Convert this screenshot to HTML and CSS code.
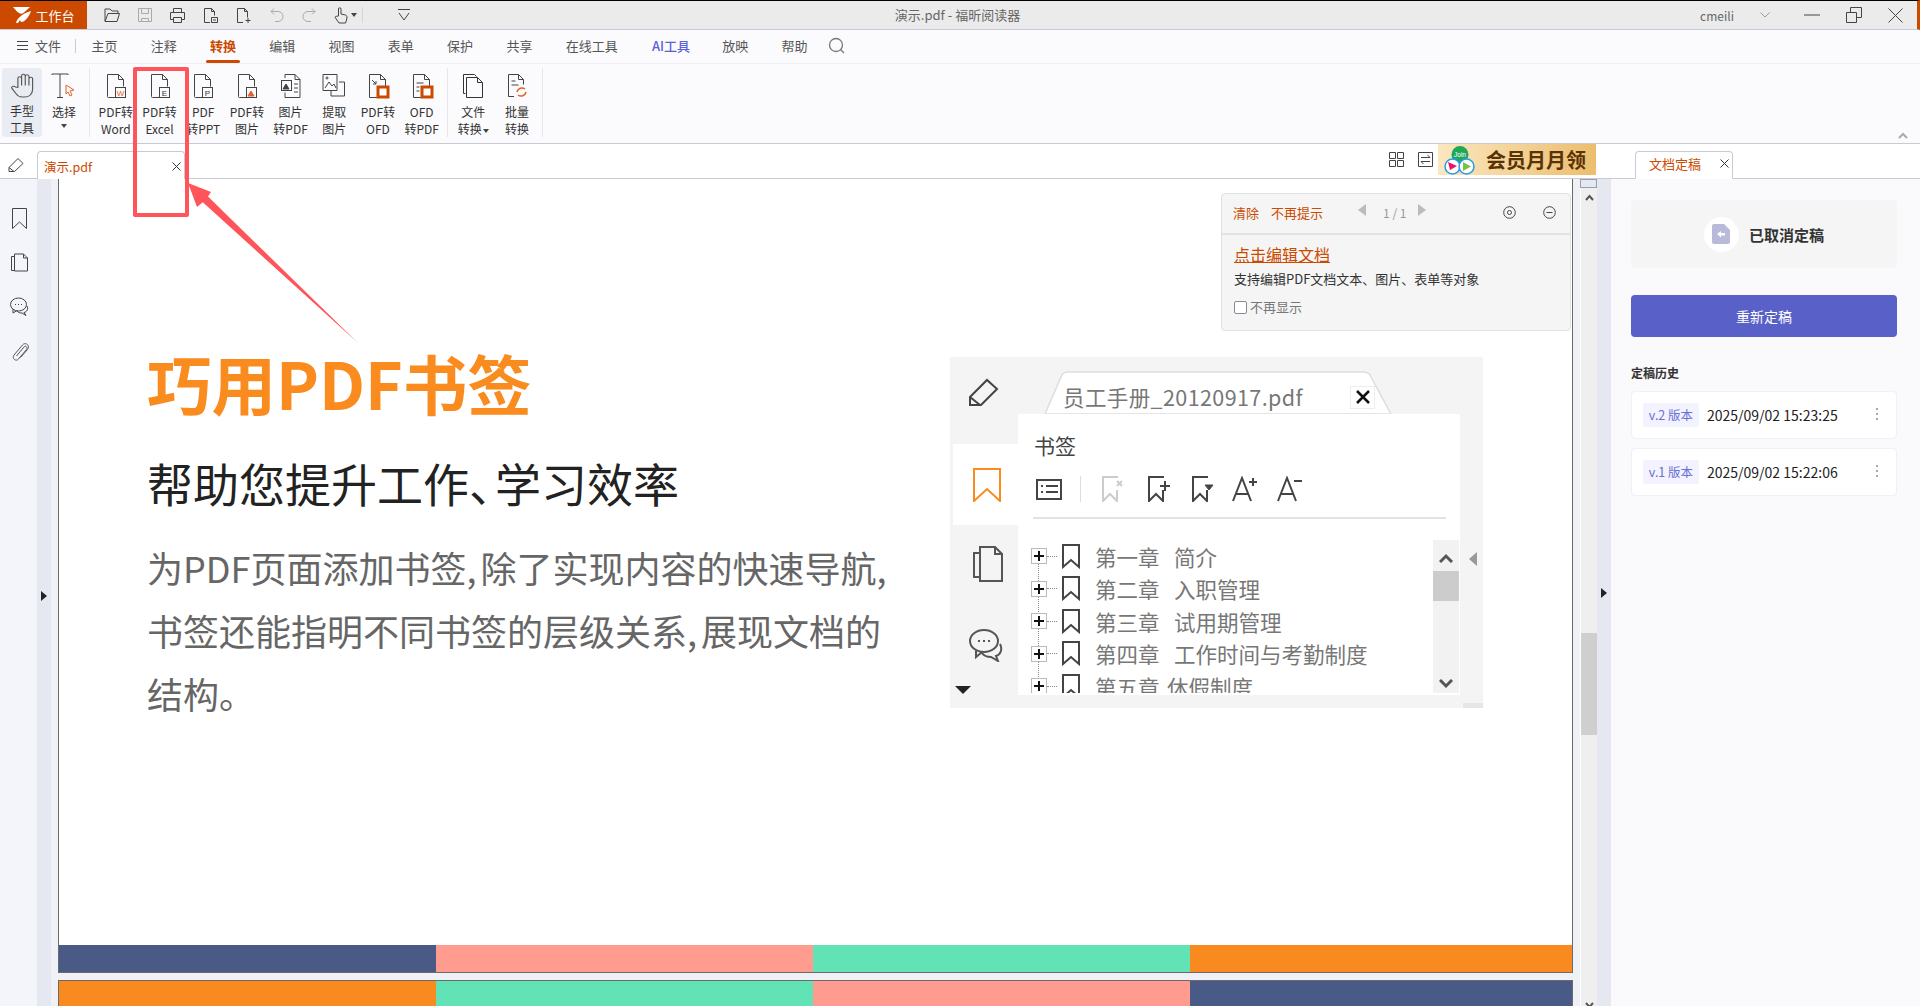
FILE: index.html
```html
<!DOCTYPE html>
<html lang="zh-CN">
<head>
  <meta charset="UTF-8" />
  <title>演示.pdf - 福昕阅读器</title>
  <link rel="stylesheet" href="styles.css">
</head>
<body>
  <!-- Title bar -->
  <header class="titlebar">
    <div class="workbench">
      <svg width="20" height="18" viewBox="0 0 20 18"><path d="M1 1h17l-6 5.500C9 9 7 7 5 5.500zM4 17c1-4 5-9 15-12-2 6-6 11-10 11l-1-2-2 3z" fill="#fff"/></svg>
      <span>工作台</span>
    </div>
    <div class="qat">
      <span class="qat-btn"><svg class="ico" width="18" height="16" viewBox="0 0 18 16"><path d="M2 14V2h5l2 2h6v2M2 14.500h12l2.500-8H5l-3 8"/></svg></span>
      <span class="qat-btn"><svg class="ico off" width="16" height="16" viewBox="0 0 16 16"><path d="M1.500 1.500h13v13h-13zM4.500 1.500v5h7v-5M4.500 14.500v-3h7v3"/></svg></span>
      <span class="qat-btn"><svg class="ico" width="17" height="17" viewBox="0 0 17 17"><path d="M4.500 5V1.500h8V5M1.500 12.500V5.500h14v7h-3M4.500 12.500h-3M4.500 10.500h8v5h-8z"/></svg></span>
      <span class="qat-btn"><svg class="ico" width="17" height="17" viewBox="0 0 17 17"><path d="M8 15.500H2.500v-14h7l3 3v4M9.500 1.500v3h3M9.500 10.500h6v5h-6zM11 13h3"/></svg></span>
      <span class="qat-btn"><svg class="ico" width="17" height="17" viewBox="0 0 17 17"><path d="M8 15.500H2.500v-14h7l3 3v6M9.500 1.500v3h3M13 11v5M10.500 13.500h5"/></svg></span>
      <span class="qat-btn"><svg class="ico off" width="15" height="16" viewBox="0 0 15 16"><path d="M5 1.500l-3 3 3 3M2 4.500h7a4.500 4.500 0 0 1 0 10H6"/></svg></span>
      <span class="qat-btn"><svg class="ico off" width="15" height="16" viewBox="0 0 15 16"><path d="M10 1.500l3 3-3 3M13 4.500H6a4.500 4.500 0 0 0 0 10h3"/></svg></span>
      <span class="qat-btn hand-btn"><svg class="ico" width="14" height="17" viewBox="0 0 14 17"><path d="M4.500 9V2a1.200 1.200 0 0 1 2.500 0v5l4.500 1c1 .3 1.500 1 1.500 2l-.5 3-1 3H5L1.500 11c-.7-1-.2-2 1-1.700z"/></svg><i class="caret"></i></span>
      <span class="qat-sep"></span>
      <span class="qat-btn"><svg class="ico" width="14" height="14" viewBox="0 0 14 14"><path d="M1 1.500h12M2 5l5 7 5-7"/></svg></span>
    </div>
    <div class="doc-title">演示.pdf - 福昕阅读器</div>
    <div class="win-ctrl">
      <span class="user">cmeili</span>
      <svg class="user-arrow ico" width="10" height="6" viewBox="0 0 10 6"><path d="M.5.500 5 5 9.500.500" stroke="#999"/></svg>
      <svg class="ico" width="16" height="2" viewBox="0 0 16 2"><path d="M0 1h16"/></svg>
      <svg class="ico" width="16" height="16" viewBox="0 0 16 16"><path d="M.5 5.500h10v10H.5zM4.500 5.500v-5h11v10h-5"/></svg>
      <svg class="ico" width="15" height="15" viewBox="0 0 15 15"><path d="M.5.500l14 14M14.500.500l-14 14"/></svg>
    </div>
  </header>

  <!-- Menu -->
  <nav class="menubar">
    <span class="file-menu">
      <svg class="ico" width="11" height="9" viewBox="0 0 11 9"><path d="M0 .500h11M0 4.500h11M0 8.500h11"/></svg>
      <span>文件</span>
    </span>
    <span class="menu-sep"></span>
    <a class="menu-item">主页</a>
    <a class="menu-item">注释</a>
    <a class="menu-item active">转换</a>
    <a class="menu-item">编辑</a>
    <a class="menu-item">视图</a>
    <a class="menu-item">表单</a>
    <a class="menu-item">保护</a>
    <a class="menu-item">共享</a>
    <a class="menu-item">在线工具</a>
    <a class="menu-item ai">AI工具</a>
    <a class="menu-item">放映</a>
    <a class="menu-item">帮助</a>
    <svg class="menu-search" width="17" height="17" viewBox="0 0 17 17" fill="none" stroke="#777" stroke-width="1.300"><circle cx="8" cy="8" r="6.500"/><path d="M12.500 12.500l3.500 3.500"/></svg>
  </nav>

  <!-- Ribbon -->
  <section class="ribbon">
    <div class="tool tool-hand">
      <svg class="ico" width="23" height="25" viewBox="0 0 20 26" preserveAspectRatio="none"><path d="M6 15V5.500a1.600 1.600 0 0 1 3.200 0V3a1.600 1.600 0 0 1 3.200 0v.5a1.600 1.600 0 0 1 3.200 0V6a1.600 1.600 0 0 1 3.200 0v11c0 5-3 8-7 8h-2c-3 0-4-1-5-3l-4-6c-1-2 1.500-3 3-1.500zM9.200 5.500V13M12.400 3.500V13M15.600 6V13" stroke="#555"/></svg>
      <span>手型<br>工具</span>
    </div>
    <div class="tool tool-select">
      <svg class="ico" width="26" height="26" viewBox="0 0 26 26"><path d="M1 2V1h16v1M9 1v23M6 24.500h6"/><path d="M15 12l8 5-4 1 2 4-2 1-2-4-2 2z" stroke="#e2622a"/></svg>
      <span>选择</span>
      <i class="caret down"></i>
    </div>
    <span class="rb-sep"></span>
    <div class="tool">
      <svg class="ico" width="24" height="26" viewBox="0 0 24 26"><path d="M11 24.500H4.500a1 1 0 0 1-1-1v-22h11l5 5v7M14.500 1.500v5h5"/><rect x="11.500" y="14.500" width="10" height="10"/><text x="16.500" y="22.500" class="badge-orange">W</text></svg>
      <span>PDF转<br>Word</span>
    </div>
    <div class="tool">
      <svg class="ico" width="24" height="26" viewBox="0 0 24 26"><path d="M11 24.500H4.500a1 1 0 0 1-1-1v-22h11l5 5v7M14.500 1.500v5h5"/><rect x="11.500" y="14.500" width="10" height="10"/><text x="16.500" y="22.500" class="badge-dark">E</text></svg>
      <span>PDF转<br>Excel</span>
    </div>
    <div class="tool">
      <svg class="ico" width="24" height="26" viewBox="0 0 24 26"><path d="M11 24.500H4.500a1 1 0 0 1-1-1v-22h11l5 5v7M14.500 1.500v5h5"/><rect x="11.500" y="14.500" width="10" height="10"/><text x="16.500" y="22.500" class="badge-dark">P</text></svg>
      <span>PDF<br>转PPT</span>
    </div>
    <div class="tool">
      <svg class="ico" width="24" height="26" viewBox="0 0 24 26"><path d="M11 24.500H4.500a1 1 0 0 1-1-1v-22h11l5 5v7M14.500 1.500v5h5"/><rect x="11.500" y="14.500" width="10" height="10"/><path d="M13 23l3-5 3 5z" fill="#e2622a" stroke="#e2622a"/></svg>
      <span>PDF转<br>图片</span>
    </div>
    <div class="tool">
      <svg class="ico" width="24" height="26" viewBox="0 0 24 26"><path d="M6 5V1.500h10l5 5v18H6v-5M16 1.500v5h5M15 11h4M15 15h4M15 19h4"/><rect x="2.500" y="7.500" width="10" height="10"/><path d="M4 16l3-5 3 5z" fill="#444"/></svg>
      <span>图片<br>转PDF</span>
    </div>
    <div class="tool">
      <svg class="ico" width="26" height="26" viewBox="0 0 26 26"><path d="M2 1.500h14v16H2zM4 15l4-6 3 4 2-2 2 4M18 9h5.500v14H10v-5"/><circle cx="6" cy="5" r="1"/></svg>
      <span>提取<br>图片</span>
    </div>
    <div class="tool">
      <svg class="ico" width="24" height="26" viewBox="0 0 24 26"><path d="M11 24.500H3.500v-23h11l5 5v7M14.500 1.500v5h5M6 7l4 4M10 8v3H7"/><rect x="12" y="14" width="10" height="10" fill="#fff" stroke="#cc4a00" stroke-width="3"/></svg>
      <span>PDF转<br>OFD</span>
    </div>
    <div class="tool">
      <svg class="ico" width="24" height="26" viewBox="0 0 24 26"><path d="M11 24.500H3.500v-23h11l5 5v7M14.500 1.500v5h5M6.500 10h7M6.500 14h3M6.500 18h3"/><rect x="12" y="14" width="10" height="10" fill="#fff" stroke="#cc4a00" stroke-width="3"/></svg>
      <span>OFD<br>转PDF</span>
    </div>
    <span class="rb-sep"></span>
    <div class="tool">
      <svg class="ico" width="24" height="26" viewBox="0 0 24 26"><path d="M4.500 20.500h-2v-19h11l2 2M5.500 4.500h11l5 5v15h-16zM16.500 4.500v5h5" stroke="#333"/></svg>
      <span>文件<br>转换<i class="caret small"></i></span>
    </div>
    <div class="tool">
      <svg class="ico" width="24" height="26" viewBox="0 0 24 26"><path d="M9 23.500H3.500v-22h10l5 5v5M13.500 1.500v5h5M6.500 8h4M6.500 12h7"/><path d="M12 19a5 5 0 0 1 8-3M21 19a5 5 0 0 1-8 3" stroke="#e2622a" stroke-width="1.500"/></svg>
      <span>批量<br>转换</span>
    </div>
    <span class="rb-sep"></span>
    <svg class="rb-collapse" width="10" height="7" viewBox="0 0 10 7" fill="none" stroke="#aaa" stroke-width="2"><path d="M1 6l4-4 4 4"/></svg>
  </section>

  <!-- Tabs -->
  <div class="tabbar">
    <svg class="tab-pencil ico" width="16" height="16" viewBox="0 0 16 16"><path d="M1 10.500 10 1.500l5 5-8.500 8H1zM1 10.500l5 4"/></svg>
    <div class="tab">
      <span>演示.pdf</span>
      <svg class="tab-x ico" width="9" height="9" viewBox="0 0 9 9"><path d="M.5.500l8 8M8.500.500l-8 8"/></svg>
    </div>
    <div class="tabbar-right">
      <svg class="ico" width="15" height="15" viewBox="0 0 15 15"><path d="M.5.500h6v6h-6zM8.500.500h6v6h-6zM.5 8.500h6v6h-6zM8.500 8.500h6v6h-6z"/></svg>
      <svg class="ico" width="15" height="15" viewBox="0 0 15 15"><path d="M.5.500h14v14H.5zM3 5.500h9L9.500 3M12 9.500H3L5.500 12"/></svg>
      <div class="vip-banner">
        <svg class="vip-logo" width="34" height="30" viewBox="0 0 34 30">
          <circle cx="17" cy="9.500" r="8.500" fill="#1fa85a"/>
          <text x="17" y="11.500" class="vip-mark">Join</text>
          <circle cx="9.500" cy="21.500" r="7.500" fill="#fff" stroke="#2a9ae8" stroke-width="1.500"/>
          <circle cx="23.500" cy="21.500" r="7.500" fill="#fff" stroke="#2a9ae8" stroke-width="1.500"/>
          <path d="M5 17l9 4-7 4z" fill="#ee1166"/>
          <path d="M20 17l8 4.500-8 4.500z" fill="#7bc043"/>
        </svg>
        <span>会员月月领</span>
      </div>
    </div>
    <div class="tab tab-side">
      <span>文档定稿</span>
      <svg class="tab-x ico" width="9" height="9" viewBox="0 0 9 9"><path d="M.5.500l8 8M8.500.500l-8 8"/></svg>
    </div>
  </div>

  <main class="main">
    <!-- Left rail -->
    <aside class="rail">
      <svg class="ico" width="16" height="22" viewBox="0 0 16 22"><path d="M.5.500h14v20L7.500 14l-7 6.500z"/></svg>
      <svg class="ico" width="17" height="21" viewBox="0 0 17 21"><path d="M3.500 17.500h-3v-14h3M3.500 1h9l4 4v13h-13zM12.500 1v4h4"/></svg>
      <svg class="ico" width="19" height="19" viewBox="0 0 19 19"><ellipse cx="8.500" cy="7.500" rx="8" ry="6.500"/><path d="M3 12l0 4 4-2.500M17 9c1.500 3 0 6-3 6.500l2 3-4-2.500c-2 0-4-.5-5-2"/><path d="M5 7.500h1M8 7.500h1M11 7.500h1"/></svg>
      <svg class="rail-clip ico" width="18" height="20" viewBox="0 0 18 20"><path d="M5.500 14 13 5c1.500-2 4 .5 2.500 2.500L7.500 17c-2.500 3-7-.5-4.500-4l8.500-10c3-3.500 8 .5 5 4.500l-7 8" stroke="#555"/></svg>
    </aside>
    <div class="gutter left"><i class="tri-right"></i></div>

    <!-- Document -->
    <div class="doc-area">
      <article class="page">
        <div class="page-body">
          <div class="pdf-text">
            <h1>巧用PDF书签</h1>
            <h2>帮助您提升工作<span class="narrow">、</span>学习效率</h2>
            <p>为PDF页面添加书签<span class="comma">,</span>除了实现内容的快速导航<span class="comma">,</span><br>书签还能指明不同书签的层级关系<span class="comma">,</span>展现文档的<br>结构。</p>
          </div>

          <figure class="fig">
            <div class="fig-top">
              <svg class="fig-pencil ico" width="30" height="28" viewBox="0 0 30 28"><path d="M1 19 18 2l10 9-16 16H1zM1 19l10 8" stroke="#444" stroke-width="2"/></svg>
              <div class="fig-tab">
                <svg class="fig-tab-bg" width="346" height="43" viewBox="0 0 346 43"><path d="M0 43 16 6c1-3 3-5 7-5h295c4 0 7 2 8 5l20 37z" fill="#fff" stroke="#ddd" stroke-width="1.500"/></svg>
                <span class="fig-tab-name">员工手册_20120917.pdf</span>
                <span class="fig-tab-x">
                  <svg width="14" height="14" viewBox="0 0 14 14" fill="none" stroke="#111" stroke-width="2.500"><path d="M1 1l12 12M13 1 1 13"/></svg>
                </span>
              </div>
            </div>
            <div class="fig-body">
              <div class="fig-side">
                <div class="fig-side-active">
                  <svg width="28" height="34" viewBox="0 0 28 34" fill="none" stroke="#f98b1f" stroke-width="2"><path d="M1 1h26v32L14 21 1 33z"/></svg>
                </div>
                <svg class="fig-side-ico ico" width="30" height="36" viewBox="0 0 30 36"><path d="M6 31H1V7h5M7 1h15l7 7v27H7zM22 1v7h7" stroke="#555" stroke-width="2"/></svg>
                <svg class="fig-side-ico wide ico" width="34" height="34" viewBox="0 0 34 34"><ellipse cx="15" cy="13" rx="14" ry="11" stroke="#555" stroke-width="2"/><path d="M7 23v6l6-5M31 16c3 6 0 11-4 12l2 5-7-4c-4 0-7-1-9-4" stroke="#555" stroke-width="2"/><path d="M9 13h2M14 13h2M19 13h2" stroke="#555" stroke-width="2"/></svg>
                <i class="fig-tri"></i>
              </div>
              <div class="fig-pane">
                <div class="fig-title">书签</div>
                <div class="fig-tools">
                  <svg class="ico" width="26" height="24" viewBox="0 0 26 24"><path d="M1 3h24v19H1zM5 9h2M10 9h12M5 15h2M10 15h12" stroke="#444" stroke-width="2"/></svg>
                  <span class="fig-tools-sep"></span>
                  <svg class="ico" width="22" height="26" viewBox="0 0 22 26"><path d="M16 1H1v24l7-7 7 7V14M15 5l5 5M20 5l-5 5" stroke="#ccc" stroke-width="2"/></svg>
                  <svg class="ico" width="22" height="26" viewBox="0 0 22 26"><path d="M16 1H1v24l7-7 7 7V14M17 5v10M12 10h10" stroke="#444" stroke-width="2"/></svg>
                  <svg class="ico" width="22" height="26" viewBox="0 0 22 26"><path d="M16 1H1v24l7-7 7 7V14" stroke="#444" stroke-width="2"/><path d="M13 9h8l-4 5z" fill="#444"/></svg>
                  <svg class="ico" width="26" height="26" viewBox="0 0 26 26"><path d="M1 25 10 2l9 23M4 18h12M17 6h8M21 2v8" stroke="#444" stroke-width="2"/></svg>
                  <svg class="ico" width="26" height="26" viewBox="0 0 26 26"><path d="M1 25 10 2l9 23M4 18h12M17 5h8" stroke="#444" stroke-width="2"/></svg>
                </div>
                <div class="fig-list">
                  <div class="fig-tree">
                    <div class="tree-row"><i class="plus"></i><i class="dots"></i><svg class="ico" width="18" height="25" viewBox="0 0 18 25"><path d="M1 1h16v22l-8-7-8 7z" stroke="#444" stroke-width="2"/></svg><span class="ch">第一章</span><span>简介</span></div>
                    <div class="tree-row"><i class="plus"></i><i class="dots"></i><svg class="ico" width="18" height="25" viewBox="0 0 18 25"><path d="M1 1h16v22l-8-7-8 7z" stroke="#444" stroke-width="2"/></svg><span class="ch">第二章</span><span>入职管理</span></div>
                    <div class="tree-row"><i class="plus"></i><i class="dots"></i><svg class="ico" width="18" height="25" viewBox="0 0 18 25"><path d="M1 1h16v22l-8-7-8 7z" stroke="#444" stroke-width="2"/></svg><span class="ch">第三章</span><span>试用期管理</span></div>
                    <div class="tree-row"><i class="plus"></i><i class="dots"></i><svg class="ico" width="18" height="25" viewBox="0 0 18 25"><path d="M1 1h16v22l-8-7-8 7z" stroke="#444" stroke-width="2"/></svg><span class="ch">第四章</span><span>工作时间与考勤制度</span></div>
                    <div class="tree-row"><i class="plus"></i><i class="dots"></i><svg class="ico" width="18" height="25" viewBox="0 0 18 25"><path d="M1 1h16v22l-8-7-8 7z" stroke="#444" stroke-width="2"/></svg><span class="ch short">第五章</span><span>休假制度</span></div>
                  </div>
                  <div class="fig-scroll">
                    <svg width="14" height="10" viewBox="0 0 14 10" fill="none" stroke="#555" stroke-width="3"><path d="M1 9l6-6 6 6"/></svg>
                    <div class="fig-thumb"></div>
                    <svg class="fig-scroll-down" width="14" height="10" viewBox="0 0 14 10" fill="none" stroke="#555" stroke-width="3"><path d="M1 1l6 6 6-6"/></svg>
                  </div>
                </div>
              </div>
              <div class="fig-right"><i class="tri-left"></i></div>
            </div>
            <div class="fig-foot"><span></span></div>
          </figure>
        </div>
        <div class="band">
          <span class="c-navy"></span><span class="c-pink"></span><span class="c-green"></span><span class="c-orange"></span>
        </div>

        <!-- Tip box -->
        <div class="tip">
          <div class="tip-head">
            <a class="tip-link">清除</a>
            <a class="tip-link">不再提示</a>
            <i class="tip-prev"></i>
            <span class="tip-count">1 / 1</span>
            <i class="tip-next"></i>
            <svg class="tip-gear ico" width="13" height="13" viewBox="0 0 13 13"><circle cx="6.500" cy="6.500" r="5.800"/><circle cx="6.500" cy="6.500" r="2"/></svg>
            <svg class="tip-min ico" width="13" height="13" viewBox="0 0 13 13"><circle cx="6.500" cy="6.500" r="5.800"/><path d="M3.500 6.500h6"/></svg>
          </div>
          <div class="tip-body">
            <a class="tip-title">点击编辑文档</a>
            <div class="tip-desc">支持编辑PDF文档文本、图片、表单等对象</div>
            <label class="tip-check"><i></i>不再显示</label>
          </div>
        </div>
      </article>

      <article class="page page-next">
        <div class="band">
          <span class="c-orange"></span><span class="c-green"></span><span class="c-pink"></span><span class="c-navy"></span>
        </div>
      </article>
    </div>

    <!-- Scrollbar -->
    <div class="vscroll">
      <div class="vscroll-top"></div>
      <svg class="vscroll-up" width="9" height="7" viewBox="0 0 9 7" fill="none" stroke="#555" stroke-width="2"><path d="M1 6l3.500-4 3.500 4"/></svg>
      <div class="vscroll-thumb"></div>
      <svg class="vscroll-down" width="9" height="7" viewBox="0 0 9 7" fill="none" stroke="#555" stroke-width="2"><path d="M1 1l3.500 4 3.500-4"/></svg>
    </div>
    <div class="gutter right"><i class="tri-right"></i></div>

    <!-- Side panel -->
    <aside class="side">
      <div class="status-card">
        <span class="status-icon">
          <svg width="18" height="20" viewBox="0 0 18 20"><path d="M2 0h10l6 6v12a2 2 0 0 1-2 2H2a2 2 0 0 1-2-2V2a2 2 0 0 1 2-2z" fill="#b9bad9"/><path d="M5 10l4-3v2h4v2.500H9v2z" fill="#fff"/></svg>
        </span>
        <span class="status-text">已取消定稿</span>
      </div>
      <button class="redo-btn">重新定稿</button>
      <h3 class="hist-title">定稿历史</h3>
      <div class="hist-item">
        <span class="hist-badge">v.2 版本</span>
        <span class="hist-date">2025/09/02 15:23:25</span>
        <span class="hist-more"><i></i><i></i><i></i></span>
      </div>
      <div class="hist-item">
        <span class="hist-badge">v.1 版本</span>
        <span class="hist-date">2025/09/02 15:22:06</span>
        <span class="hist-more"><i></i><i></i><i></i></span>
      </div>
    </aside>
  </main>

  <!-- Annotation drawn over the app -->
  <div class="mark-box"></div>
  <svg class="mark-arrow" width="400" height="360" viewBox="0 0 400 360"><polygon points="188,183 211,192 208,196.500 358,343 202.800,202.300 197,207" fill="#ff5459"/></svg>
</body>
</html>
```

FILE: styles.css
```css
* {
  box-sizing: border-box;
}

body {
  margin: 0;
  width: 1920px;
  height: 1006px;
  overflow: hidden;
  display: flex;
  flex-direction: column;
  position: relative;
  font-family: "Noto Sans CJK SC", "Noto Sans", sans-serif;
  color: #444;
  background: #fff;
}

i {
  display: block;
  font-style: normal;
}

.ico {
  display: block;
  fill: none;
  stroke: #444;
  stroke-width: 1;
  flex: none;
}

.ico.off {
  stroke: #aaa;
}

/* Title bar */
.titlebar {
  height: 30px;
  flex: none;
  display: flex;
  align-items: center;
  position: relative;
  background: #ebebeb;
  border-top: 1px solid #000;
  border-bottom: 1px solid #c9c9d8;
  border-right: 3px solid #cc4a00;
}

.workbench {
  width: 87px;
  height: 100%;
  display: flex;
  align-items: center;
  justify-content: center;
  gap: 3px;
  background: #cc4a00;
  color: #fff;
  font-size: 13px;
}

.qat {
  display: flex;
  align-items: center;
  padding-left: 8px;
}

.qat-btn {
  width: 33px;
  display: flex;
  justify-content: center;
  align-items: center;
}

.hand-btn {
  gap: 3px;
  padding-left: 6px;
}

.caret {
  width: 0;
  height: 0;
  border-left: 3.500px solid transparent;
  border-right: 3.500px solid transparent;
  border-top: 4px solid #444;
}

.caret.small {
  display: inline-block;
  margin-left: 1px;
  vertical-align: middle;
}

.caret.down {
  margin-top: 4px;
}

.qat-sep {
  width: 1px;
  height: 16px;
  margin: 0 24px 0 3px;
  background: #d5d5d5;
}

.doc-title {
  position: absolute;
  left: 0;
  right: 0;
  top: 5px;
  text-align: center;
  font-size: 13px;
  line-height: 18px;
  color: #666;
  padding-right: 2px;
  pointer-events: none;
}

.win-ctrl {
  margin-left: auto;
  display: flex;
  align-items: center;
  padding-right: 14px;
  gap: 26px;
}

.user {
  font-size: 12px;
  color: #666;
}

.user-arrow {
  margin-right: 8px;
}

/* Menu */
.menubar {
  height: 34px;
  flex: none;
  display: flex;
  align-items: center;
  gap: 33.250px;
  padding-left: 17px;
  background: #fbfbfd;
  border-bottom: 1px solid #f0f0f4;
  font-size: 13px;
  color: #555;
}

.file-menu {
  display: flex;
  align-items: center;
  gap: 7px;
  margin-right: -22px;
  margin-top: -2px;
}

.menu-sep {
  width: 1px;
  height: 14px;
  background: #ccc;
  margin-left: 3px;
  margin-right: -18px;
  margin-top: -2px;
}

.menu-item {
  height: 100%;
  display: flex;
  align-items: center;
  position: relative;
  padding-bottom: 2px;
  white-space: nowrap;
}

.menu-item.active {
  color: #cc4a00;
  font-weight: 700;
}

.menu-item.active::after {
  content: "";
  position: absolute;
  left: -4px;
  right: -4px;
  bottom: 0;
  height: 3px;
  border-radius: 2px;
  background: #cc4a00;
}

.menu-item.ai {
  color: #5a62d8;
  font-weight: 500;
  margin-left: 1px;
  margin-right: -1px;
}

.menu-search {
  margin-left: -13px;
  margin-top: -2px;
}

/* Ribbon */
.ribbon {
  height: 80px;
  flex: none;
  display: flex;
  align-items: flex-start;
  position: relative;
  padding: 4px 0 0 2px;
  background: #fbfbfd;
  border-bottom: 1px solid #c9c9d8;
}

.tool {
  width: 43.700px;
  height: 69px;
  display: flex;
  flex-direction: column;
  align-items: center;
  padding-top: 5px;
  font-size: 12px;
  line-height: 17px;
  color: #333;
  text-align: center;
  white-space: nowrap;
}

.tool span {
  margin-top: 4px;
}

.tool-hand {
  width: 40px;
  background: #e9ecf3;
  border-radius: 3px;
}

.tool-select {
  width: 44px;
}

.rb-sep {
  width: 1px;
  height: 69px;
  margin: 0 4px 0 3px;
  background: #e6e6ec;
}

.rb-collapse {
  position: absolute;
  right: 12px;
  bottom: 4px;
}

.badge-orange,
.badge-dark,
.vip-mark {
  font-size: 8px;
  font-family: "Liberation Sans", sans-serif;
  text-anchor: middle;
  stroke: none;
}

.badge-orange {
  fill: #e2622a;
}

.badge-dark {
  fill: #333;
}

.vip-mark {
  font-size: 6.500px;
  font-weight: 400;
  fill: #fff;
}

/* Tabs */
.tabbar {
  height: 35px;
  flex: none;
  display: flex;
  align-items: flex-end;
  background: #fff;
  border-bottom: 1px solid #c9c9d8;
}

.tab-pencil {
  align-self: center;
  margin: 7px 13px 0 8px;
}

.tab {
  width: 148px;
  height: 28px;
  margin-bottom: -1px;
  display: flex;
  align-items: center;
  justify-content: space-between;
  padding: 2px 3px 0 6px;
  font-size: 12.500px;
  color: #cc4a00;
  background: #fff;
  border: 1px solid #c9c9d8;
  border-bottom: none;
  border-radius: 4px 4px 0 0;
}

.tabbar-right {
  display: flex;
  align-items: center;
  align-self: flex-start;
  margin-left: auto;
  gap: 14px;
}

.vip-banner {
  width: 158px;
  height: 31px;
  margin-left: -9px;
  display: flex;
  align-items: center;
  padding-left: 5px;
  gap: 9px;
  background: linear-gradient(90deg, #fbe7c0, #ecbd6e);
  color: #5a3304;
  font-size: 20px;
  font-weight: 700;
}

.vip-logo {
  flex: none;
}

.tab-side {
  width: 98px;
  margin-left: 39px;
  margin-right: 187px;
  padding: 0 3px 4px 13px;
  font-size: 13px;
}

.tab-x {
  stroke: #333;
}

/* Main area */
.main {
  flex: 1;
  display: flex;
  min-height: 0;
}

.rail {
  width: 37px;
  flex: none;
  display: flex;
  flex-direction: column;
  align-items: center;
  gap: 23px;
  padding: 29px 0 0 2px;
  background: #f3f5fa;
}

.rail-clip {
  margin-top: 3px;
}

.gutter {
  flex: none;
  display: flex;
  align-items: center;
  justify-content: center;
  background: #e5e8f1;
}

.gutter.left {
  width: 14px;
  padding-top: 7px;
}

.gutter.right {
  width: 14px;
}

.tri-right {
  width: 0;
  height: 0;
  border-top: 5px solid transparent;
  border-bottom: 5px solid transparent;
  border-left: 6px solid #222;
}

.doc-area {
  width: 1530px;
  flex: none;
  display: flex;
  flex-direction: column;
  gap: 7px;
  padding: 0 7px 0 7px;
  background: #eff1f6;
  border-right: 1px solid #fff;
}

.page {
  height: 794px;
  flex: none;
  display: flex;
  flex-direction: column;
  position: relative;
  background: #fff;
  border: 1px solid #6a6a6a;
  border-top: none;
}

.page-next {
  flex: 1;
  height: auto;
  border-top: 1px solid #6a6a6a;
  border-bottom: none;
}

.page-body {
  flex: 1;
  display: flex;
  min-height: 0;
}

.pdf-text {
  width: 891px;
  flex: none;
  padding: 163px 0 0 88px;
}

.pdf-text h1 {
  margin: 0;
  font-size: 64.500px;
  line-height: 80px;
  font-weight: 700;
  color: #f98b1f;
  white-space: nowrap;
}

.pdf-text h2 {
  margin: 30px 0 0;
  font-size: 46px;
  line-height: 60px;
  font-weight: 400;
  color: #222;
  white-space: nowrap;
}

.narrow {
  letter-spacing: -20px;
}

.pdf-text p {
  margin: 24px 0 0;
  font-size: 36px;
  line-height: 63px;
  color: #666;
  white-space: nowrap;
}

.comma {
  margin-right: 4px;
}

.band {
  height: 27px;
  flex: none;
  display: grid;
  grid-template-columns: 377px 377px 377px 1fr;
}

.c-navy { background: #4a5a86; }
.c-pink { background: #ff9c8f; }
.c-green { background: #62e3b5; }
.c-orange { background: #f98a1f; }

/* Bookmark figure inside the PDF */
.fig {
  width: 533px;
  height: 351px;
  margin: 178px 0 0;
  flex: none;
  display: flex;
  flex-direction: column;
  background: #f4f4f4;
}

.fig-top {
  height: 57px;
  flex: none;
  display: flex;
  align-items: flex-end;
}

.fig-pencil {
  margin: 0 0 8px 19px;
}

.fig-tab {
  width: 346px;
  height: 43px;
  margin-left: 46px;
  position: relative;
  display: flex;
  align-items: center;
  padding: 7px 16px 0 18px;
  justify-content: space-between;
}

.fig-tab-bg {
  position: absolute;
  left: 0;
  top: 0;
}

.fig-tab-name {
  position: relative;
  font-size: 21.500px;
  color: #777;
  white-space: nowrap;
  letter-spacing: .4px;
}

.fig-tab-x {
  position: relative;
  width: 25px;
  height: 23px;
  margin-top: 2px;
  display: flex;
  align-items: center;
  justify-content: center;
  background: #fff;
  border: 1px solid #eee;
}

.fig-body {
  height: 281px;
  flex: none;
  display: flex;
}

.fig-side {
  width: 68px;
  flex: none;
  display: flex;
  flex-direction: column;
  position: relative;
  padding-top: 30px;
}

.fig-side-active {
  height: 81px;
  margin-left: 3px;
  display: flex;
  align-items: center;
  padding-left: 20px;
  background: #fff;
}

.fig-side-ico {
  margin: 21px 0 0 23px;
}

.fig-side-ico.wide {
  margin: 46px 0 0 19px;
}

.fig-tri {
  position: absolute;
  left: 5px;
  bottom: 1px;
  width: 0;
  height: 0;
  border-left: 8px solid transparent;
  border-right: 8px solid transparent;
  border-top: 8px solid #222;
}

.fig-pane {
  width: 442px;
  flex: none;
  overflow: hidden;
  padding: 15px 1px 0 16px;
  background: #fff;
}

.fig-title {
  font-size: 21px;
  line-height: 32px;
  color: #444;
}

.fig-tools {
  height: 43px;
  margin: 15px 13px 0 -1px;
  display: flex;
  align-items: flex-start;
  padding-left: 3px;
  border-bottom: 2px solid #e2e2e2;
}

.fig-tools svg:nth-of-type(1) { margin-top: 1px; }
.fig-tools svg:nth-of-type(2) { margin-left: 21px; }
.fig-tools svg:nth-of-type(3) { margin-left: 24px; }
.fig-tools svg:nth-of-type(4) { margin-left: 22px; }
.fig-tools svg:nth-of-type(5) { margin-left: 18px; }
.fig-tools svg:nth-of-type(6) { margin-left: 19px; }

.fig-tools-sep {
  width: 1px;
  height: 26px;
  margin-left: 18px;
  background: #ddd;
}

.fig-list {
  height: 153px;
  margin: 21px 0 0 -3px;
  display: flex;
  overflow: hidden;
}

.fig-tree {
  flex: 1;
  min-width: 0;
  font-size: 21.500px;
  color: #777;
}

.tree-row {
  height: 32.500px;
  display: flex;
  align-items: center;
  white-space: nowrap;
}

.plus {
  width: 16px;
  height: 16px;
  flex: none;
  position: relative;
  border: 1px solid #bbb;
  background:
    linear-gradient(#111, #111) center / 10px 2px no-repeat,
    linear-gradient(#111, #111) center / 2px 10px no-repeat;
}

.plus::after {
  content: "";
  position: absolute;
  left: 6px;
  top: 15px;
  height: 17px;
  border-left: 1px dotted #888;
}

.dots {
  width: 10px;
  margin: 0 5px 0 0;
  border-top: 1px dotted #888;
}

.ch {
  width: 79px;
  margin-left: 15px;
  flex: none;
}

.ch.short {
  width: 72px;
}

.fig-scroll {
  width: 26px;
  flex: none;
  display: flex;
  flex-direction: column;
  align-items: center;
  padding-top: 13px;
  position: relative;
  background: #f2f2f2;
}

.fig-thumb {
  width: 26px;
  height: 30px;
  margin-top: 8px;
  background: #ccc;
}

.fig-scroll-down {
  position: absolute;
  bottom: 4px;
  left: 6px;
}

.fig-right {
  flex: 1;
  padding: 138px 0 0 9px;
}

.tri-left {
  width: 0;
  height: 0;
  border-top: 7px solid transparent;
  border-bottom: 7px solid transparent;
  border-right: 8px solid #999;
}

.fig-foot {
  flex: 1;
  display: flex;
  justify-content: flex-end;
  align-items: flex-end;
}

.fig-foot span {
  width: 20px;
  height: 5px;
  background: #e6e6e6;
}

/* Tip box */
.tip {
  position: absolute;
  left: 1162px;
  top: 14px;
  width: 350px;
  height: 138px;
  background: #f5f5f5;
  border: 1px solid #e0e0e0;
  border-radius: 4px;
}

.tip-head {
  height: 41px;
  display: flex;
  align-items: center;
  padding: 0 0 3px 11px;
  border-bottom: 2px solid #e2e2e2;
  font-size: 13px;
}

.tip-link {
  color: #cc4a00;
  margin-right: 12px;
}

.tip-prev,
.tip-next {
  width: 0;
  height: 0;
  margin-bottom: 4px;
  border-top: 6px solid transparent;
  border-bottom: 6px solid transparent;
}

.tip-prev {
  margin-left: 23px;
  border-right: 8px solid #bbb;
}

.tip-next {
  border-left: 8px solid #bbb;
}

.tip-count {
  font-size: 12px;
  color: #999;
  margin: 0 12px 0 17px;
}

.tip-gear {
  margin-left: 77px;
}

.tip-min {
  margin-left: 27px;
}

.tip-body {
  padding: 7px 0 0 12px;
}

.tip-title {
  display: block;
  font-size: 16px;
  line-height: 24px;
  color: #cc4a00;
  text-decoration: underline;
}

.tip-desc {
  font-size: 13px;
  line-height: 20px;
  margin-top: 3px;
  color: #333;
}

.tip-check {
  display: flex;
  align-items: center;
  gap: 3px;
  margin-top: 8px;
  font-size: 13px;
  line-height: 20px;
  color: #777;
}

.tip-check i {
  width: 13px;
  height: 13px;
  background: #fff;
  border: 1px solid #8a8a96;
  border-radius: 2px;
}

/* Page scrollbar */
.vscroll {
  width: 16px;
  flex: none;
  display: flex;
  flex-direction: column;
  align-items: center;
  position: relative;
  background: #efefef;
}

.vscroll-top {
  width: 17px;
  height: 9px;
  flex: none;
  margin-left: -1px;
  background: #e5e8f1;
  border: 1px solid #9a9fb0;
}

.vscroll-up {
  margin-top: 6px;
  flex: none;
}

.vscroll-thumb {
  width: 16px;
  height: 102px;
  margin-top: 432px;
  background: #cfcfcf;
  flex: none;
}

.vscroll-down {
  margin-top: auto;
  margin-bottom: -3px;
  flex: none;
}

/* Side panel */
.side {
  flex: 1;
  padding: 21px 23px 0 20px;
  background: #fafafd;
}

.status-card {
  height: 68px;
  display: flex;
  align-items: center;
  justify-content: center;
  gap: 10px;
  background: #f5f5f5;
  border-radius: 4px;
}

.status-icon {
  width: 35px;
  height: 35px;
  display: flex;
  align-items: center;
  justify-content: center;
  border-radius: 50%;
  background: #fff;
}

.status-text {
  font-size: 15px;
  font-weight: 700;
  color: #333;
}

.redo-btn {
  display: block;
  width: 100%;
  height: 42px;
  margin-top: 27px;
  border: none;
  border-radius: 4px;
  background: #5960c8;
  color: #fff;
  font: inherit;
  font-size: 14px;
}

.hist-title {
  margin: 27px 0 9px;
  font-size: 12px;
  line-height: 18px;
  font-weight: 700;
  color: #333;
}

.hist-item {
  height: 48px;
  margin-bottom: 9px;
  display: flex;
  align-items: center;
  padding-left: 11px;
  background: #fff;
  border: 1px solid #f0f0f5;
  border-radius: 4px;
}

.hist-badge {
  width: 56px;
  height: 24px;
  flex: none;
  text-align: center;
  font-size: 12.500px;
  line-height: 23px;
  border-radius: 2px;
  background: #f2f3ff;
  color: #6a6fd4;
}

.hist-date {
  margin-left: 8px;
  font-size: 14px;
  color: #222;
  white-space: nowrap;
}

.hist-more {
  margin-left: auto;
  margin-right: 18px;
  display: flex;
  flex-direction: column;
  gap: 3px;
  margin-top: -3px;
}

.hist-more i {
  width: 2px;
  height: 2px;
  background: #aaa;
}

/* Red annotation */
.mark-box {
  position: absolute;
  left: 133px;
  top: 67px;
  width: 56px;
  height: 150px;
  border: 4px solid #ff5459;
  border-radius: 2px;
}

.mark-arrow {
  position: absolute;
  left: 0;
  top: 0;
}
```
